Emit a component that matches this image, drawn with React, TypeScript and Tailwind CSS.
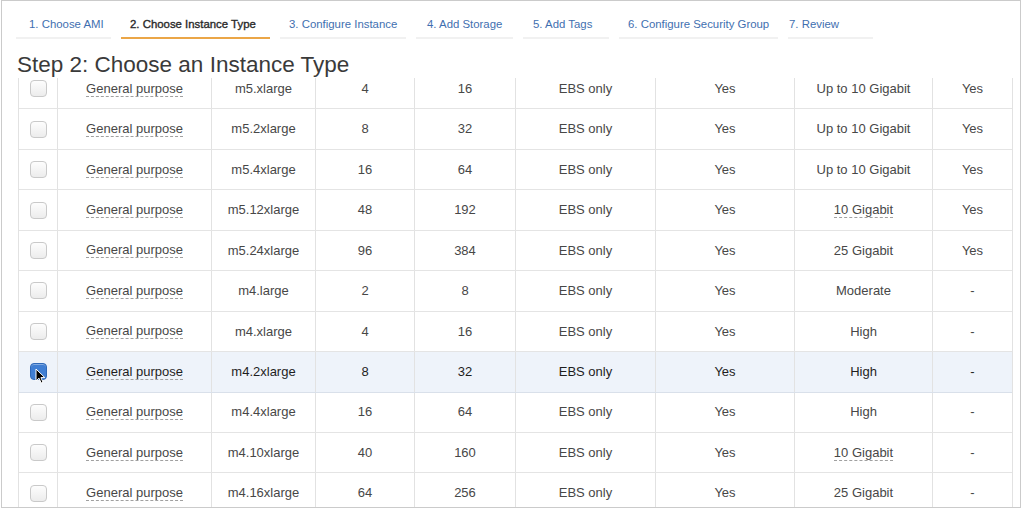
import React from 'react'

interface Row {
  type: string
  family: string
  vcpu: number
  mem: number
  storage: string
  ebs: string
  net: string
  netTip?: boolean
  ipv6: string
  selected?: boolean
}

const tabs = [
  { label: '1. Choose AMI', cls: 'w-[95px] pl-[13px]' },
  { label: '2. Choose Instance Type', cls: 'w-[149px] pl-[9px]', active: true },
  { label: '3. Configure Instance', cls: 'w-[126px] pl-[9px]' },
  { label: '4. Add Storage', cls: 'w-[97px] pl-[11px]' },
  { label: '5. Add Tags', cls: 'w-[86px] pl-[10px]' },
  { label: '6. Configure Security Group', cls: 'w-[159px] pl-[9px]' },
  { label: '7. Review', cls: 'w-[85px] pl-[1px]' },
]

const rows: Row[] = [
  { family: 'General purpose', type: 'm5.xlarge', vcpu: 4, mem: 16, storage: 'EBS only', ebs: 'Yes', net: 'Up to 10 Gigabit', ipv6: 'Yes' },
  { family: 'General purpose', type: 'm5.2xlarge', vcpu: 8, mem: 32, storage: 'EBS only', ebs: 'Yes', net: 'Up to 10 Gigabit', ipv6: 'Yes' },
  { family: 'General purpose', type: 'm5.4xlarge', vcpu: 16, mem: 64, storage: 'EBS only', ebs: 'Yes', net: 'Up to 10 Gigabit', ipv6: 'Yes' },
  { family: 'General purpose', type: 'm5.12xlarge', vcpu: 48, mem: 192, storage: 'EBS only', ebs: 'Yes', net: '10 Gigabit', netTip: true, ipv6: 'Yes' },
  { family: 'General purpose', type: 'm5.24xlarge', vcpu: 96, mem: 384, storage: 'EBS only', ebs: 'Yes', net: '25 Gigabit', ipv6: 'Yes' },
  { family: 'General purpose', type: 'm4.large', vcpu: 2, mem: 8, storage: 'EBS only', ebs: 'Yes', net: 'Moderate', ipv6: '-' },
  { family: 'General purpose', type: 'm4.xlarge', vcpu: 4, mem: 16, storage: 'EBS only', ebs: 'Yes', net: 'High', ipv6: '-' },
  { family: 'General purpose', type: 'm4.2xlarge', vcpu: 8, mem: 32, storage: 'EBS only', ebs: 'Yes', net: 'High', ipv6: '-', selected: true },
  { family: 'General purpose', type: 'm4.4xlarge', vcpu: 16, mem: 64, storage: 'EBS only', ebs: 'Yes', net: 'High', ipv6: '-' },
  { family: 'General purpose', type: 'm4.10xlarge', vcpu: 40, mem: 160, storage: 'EBS only', ebs: 'Yes', net: '10 Gigabit', netTip: true, ipv6: '-' },
  { family: 'General purpose', type: 'm4.16xlarge', vcpu: 64, mem: 256, storage: 'EBS only', ebs: 'Yes', net: '25 Gigabit', ipv6: '-' },
]

function Checkbox({ checked }: { checked?: boolean }) {
  if (checked) {
    return (
      <div className="relative">
        <div className="w-[17px] h-[17px] rounded-[4px] border border-[#2f69b8] bg-[#3f7ed3] shadow-[inset_0_1px_0_rgba(255,255,255,0.35)]" />
        <svg className="absolute left-[5px] top-[5px]" width="11" height="16" viewBox="0 0 11 16">
          <path d="M1 1 L1 13 L4 10.2 L6.2 15 L8 14.2 L5.9 9.6 L9.8 9.6 Z" fill="#000" stroke="#fff" strokeWidth="1" strokeLinejoin="round" />
        </svg>
      </div>
    )
  }
  return (
    <div className="w-[17px] h-[17px] rounded-[4px] border border-[#c9c9c9] bg-gradient-to-b from-[#fdfdfd] to-[#ececec]" />
  )
}

function Tip({ children }: { children: React.ReactNode }) {
  return <span className="border-b border-dashed border-[#a0a0a0] leading-[15px]">{children}</span>
}

export default function App() {
  return (
    <div className="w-[1024px] h-[509px] bg-white" style={{ fontFamily: '"Liberation Sans", Arial, sans-serif' }}>
      <div className="ml-[1px] w-[1020px] h-[508px] border border-[#cbcbcb] flex flex-col overflow-hidden">
        <div className="flex pl-[14px] pt-[15px]">
          {tabs.map((t, i) => (
            <div
              key={t.label}
              className={`${t.cls} ${i > 0 ? 'ml-[10px]' : ''} pb-[5px] border-b-2 text-[11.4px] leading-[16px] whitespace-nowrap ${
                t.active ? 'border-[#eba647] text-[#2a2a2a] [-webkit-text-stroke:0.35px_#2a2a2a]' : 'border-[#f1f1f1] text-[#3f6fb0]'
              }`}
            >
              {t.label}
            </div>
          ))}
        </div>

        <h1 className="pt-[13px] pl-[15px] text-[22.5px] leading-[26px] text-[#3a3a3a] font-normal">
          Step 2: Choose an Instance Type
        </h1>

        <div className="ml-[16px] w-[995px] flex-1 overflow-hidden">
          <div className="-mt-[9px] border-l border-r border-[#e2e2e2]">
            {rows.map((r) => (
              <div
                key={r.type}
                className={`grid grid-cols-[39px_154px_104px_99px_101px_140px_139px_138px_79px] h-[40.45px] border-b text-[13px] ${
                  r.selected ? 'bg-[#eef3fa] border-[#d9e0ea] text-[#1e1e1e]' : 'border-[#e4e4e4] text-[#474747]'
                }`}
              >
                <div className="flex items-center justify-center border-r border-[#e2e2e2]">
                  <Checkbox checked={r.selected} />
                </div>
                <div className="flex items-center justify-center border-r border-[#e2e2e2]">
                  <Tip>{r.family}</Tip>
                </div>
                <div className="flex items-center justify-center border-r border-[#e2e2e2]">{r.type}</div>
                <div className="flex items-center justify-center border-r border-[#e2e2e2]">{r.vcpu}</div>
                <div className="flex items-center justify-center border-r border-[#e2e2e2]">{r.mem}</div>
                <div className="flex items-center justify-center border-r border-[#e2e2e2]">{r.storage}</div>
                <div className="flex items-center justify-center border-r border-[#e2e2e2]">{r.ebs}</div>
                <div className="flex items-center justify-center border-r border-[#e2e2e2]">
                  {r.netTip ? <Tip>{r.net}</Tip> : r.net}
                </div>
                <div className="flex items-center justify-center">{r.ipv6}</div>
              </div>
            ))}
          </div>
        </div>
      </div>
    </div>
  )
}
